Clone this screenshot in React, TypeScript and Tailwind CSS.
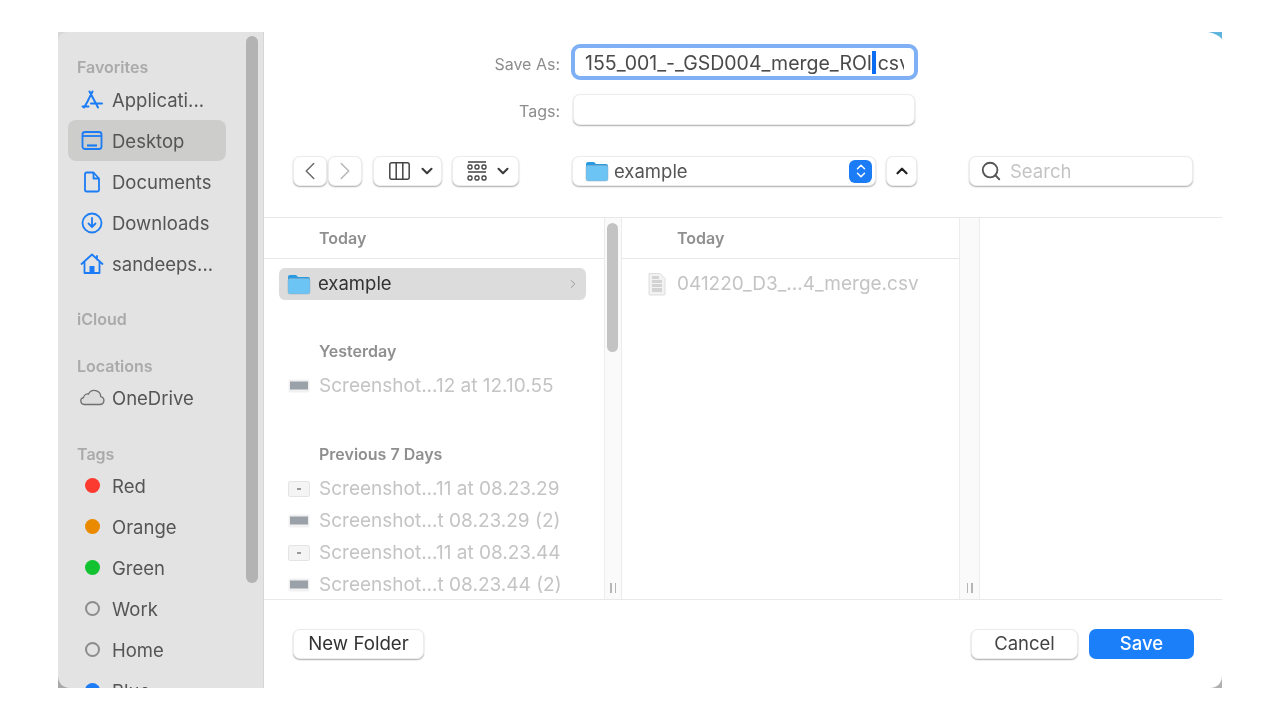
import { ChevronDown, ChevronLeft, ChevronRight, ChevronUp, Search } from "lucide-react";

const BLUE = "#1b7cf5";

function AppsIcon() {
  return (
    <svg width="24" height="24" viewBox="0 0 24 24" fill="none" stroke={BLUE} strokeWidth="2" strokeLinecap="round">
      <path d="M12.5 3.5 7 14.5M9.5 3.5l8.5 16M2.5 18.5h6M11 15.5h11M7 14.5l-3 5" />
    </svg>
  );
}

function DesktopIcon() {
  return (
    <svg width="24" height="24" viewBox="0 0 24 24" fill="none" stroke={BLUE} strokeWidth="1.8">
      <rect x="2.5" y="3" width="19" height="17" rx="2.5" />
      <path d="M3 7h18" />
      <path d="M7 16.5h10" strokeWidth="2.2" />
    </svg>
  );
}

function DocIcon() {
  return (
    <svg width="24" height="24" viewBox="0 0 24 24" fill="none" stroke={BLUE} strokeWidth="1.8" strokeLinejoin="round">
      <path d="M6.5 2.5h7L19 8.5V20a1.5 1.5 0 0 1-1.5 1.5h-11A1.500 1.500 0 0 1 5 20V4a1.500 1.500 0 0 1 1.500-1.500Z" />
      <path d="M13.5 2.5v6H19" />
    </svg>
  );
}

function DownloadIcon() {
  return (
    <svg width="24" height="24" viewBox="0 0 24 24" fill="none" stroke={BLUE} strokeWidth="1.8" strokeLinecap="round" strokeLinejoin="round">
      <circle cx="12" cy="12" r="9.5" />
      <path d="M12 7v9M8.5 12.5 12 16l3.500-3.500" />
    </svg>
  );
}

function HomeIcon() {
  return (
    <svg width="24" height="24" viewBox="0 0 24 24" fill="none" stroke={BLUE} strokeWidth="1.8" strokeLinecap="round" strokeLinejoin="round">
      <path d="M1.5 12 12 2.500 22.500 12M4.500 10v11h15V10M17 4v3.500" />
      <rect x="9.5" y="14" width="5" height="7" fill={BLUE} stroke="none" />
    </svg>
  );
}

function CloudIcon() {
  return (
    <svg width="28" height="20" viewBox="0 0 28 20" fill="#dcdcdc" stroke="#6f6f6f" strokeWidth="1.3">
      <path d="M6.5 16.5H22a4 4 0 0 0 .8-7.900A6.500 6.500 0 0 0 10.500 6a4.500 4.500 0 0 0-5 3.600 3.500 3.500 0 0 0 1 6.900Z" />
    </svg>
  );
}

function FolderIcon() {
  return (
    <svg width="24" height="24" viewBox="0 0 24 24">
      <path d="M1 5a2 2 0 0 1 2-2h6l2 2h10a2 2 0 0 1 2 2v3H1Z" fill="#2a9ae0" />
      <rect x="1" y="6.5" width="22" height="15.5" rx="2" fill="#6cc4f5" stroke="#8ea9b8" strokeWidth="0.5" />
    </svg>
  );
}

function Thumb({ kind }: { kind: "dark" | "light" }) {
  return kind === "dark" ? (
    <svg width="22" height="16" viewBox="0 0 22 16">
      <rect x="0.5" y="1.5" width="21" height="13" rx="1.5" fill="#f1f1f1" />
      <rect x="2" y="3.5" width="18" height="8" fill="#9aa1a9" />
    </svg>
  ) : (
    <svg width="22" height="18" viewBox="0 0 22 18">
      <rect x="0.5" y="1.5" width="21" height="15" rx="1.5" fill="#f4f4f4" stroke="#e4e4e4" />
      <rect x="9" y="8" width="4" height="2" fill="#9a9a9a" />
    </svg>
  );
}

function CsvIcon() {
  return (
    <svg width="20" height="24" viewBox="0 0 20 24">
      <path d="M2 1.5h11l5 5V22a1 1 0 0 1-1 1H3a1 1 0 0 1-1-1Z" fill="#f2f2f2" stroke="#dedede" />
      <path d="M5 4h7v3H5ZM5 8h10v3H5ZM5 12h10v3H5ZM5 16h10v4H5Z" fill="#d3d3d3" />
    </svg>
  );
}

function ColumnsIcon() {
  return (
    <svg width="21" height="18" viewBox="0 0 21 18" fill="none" stroke="#444" strokeWidth="1.5">
      <rect x="0.8" y="0.8" width="19.4" height="16.4" rx="2" />
      <path d="M7.200 1v16M13.800 1v16" />
    </svg>
  );
}

function GridIcon() {
  return (
    <svg width="20" height="21" viewBox="0 0 20 21" fill="none" stroke="#444" strokeWidth="1.4">
      <path d="M1 1h18M1 11h18" />
      <rect x="1" y="4" width="4" height="4" rx="1.5" />
      <rect x="8" y="4" width="4" height="4" rx="1.5" />
      <rect x="15" y="4" width="4" height="4" rx="1.5" />
      <rect x="1" y="15" width="4" height="4" rx="1.5" />
      <rect x="8" y="15" width="4" height="4" rx="1.5" />
      <rect x="15" y="15" width="4" height="4" rx="1.5" />
    </svg>
  );
}

function SideHead({ label, mt }: { label: string; mt: string }) {
  return <div className={`${mt} h-[20px] pl-[19px] text-[16px] leading-[20px] font-semibold text-[#aaa]`}>{label}</div>;
}

function SideItem({ icon, label, active }: { icon: React.ReactNode; label: string; active?: boolean }) {
  return (
    <div className={`ml-[10px] mr-[37px] h-[41px] flex items-center rounded-[8px] ${active ? "bg-[#cdcdcc]" : ""}`}>
      <div className="w-[44px] pl-[4px] shrink-0 flex justify-center">{icon}</div>
      <span className="pt-[2px] text-[18.5px] text-[#555] whitespace-nowrap">{label}</span>
    </div>
  );
}

function Dot({ color }: { color: string }) {
  return <span className="w-[15px] h-[15px] rounded-full" style={{ background: color }} />;
}

function Ring() {
  return <span className="w-[15px] h-[15px] rounded-full border-2 border-[#8c8c8c]" />;
}

function Sidebar() {
  return (
    <aside className="relative w-[206px] shrink-0 bg-[#e3e3e3] overflow-hidden border-r border-[#d6d6d6]">
      <div className="pt-[25px]">
        <SideHead label="Favorites" mt="" />
        <div className="mt-[2px]">
          <SideItem icon={<AppsIcon />} label="Applicati..." />
          <SideItem icon={<DesktopIcon />} label="Desktop" active />
          <SideItem icon={<DocIcon />} label="Documents" />
          <SideItem icon={<DownloadIcon />} label="Downloads" />
          <SideItem icon={<HomeIcon />} label="sandeeps..." />
        </div>
        <SideHead label="iCloud" mt="mt-[25px]" />
        <SideHead label="Locations" mt="mt-[27px]" />
        <div className="mt-[1px]">
          <SideItem icon={<CloudIcon />} label="OneDrive" />
        </div>
        <SideHead label="Tags" mt="mt-[26px]" />
        <div className="mt-[1px]">
          <SideItem icon={<Dot color="#fb3a30" />} label="Red" />
          <SideItem icon={<Dot color="#ea8a00" />} label="Orange" />
          <SideItem icon={<Dot color="#12c230" />} label="Green" />
          <SideItem icon={<Ring />} label="Work" />
          <SideItem icon={<Ring />} label="Home" />
          <SideItem icon={<Dot color="#1b7cf5" />} label="Blue" />
        </div>
      </div>
      <div className="absolute top-[4px] right-[5px] w-[12px] h-[547px] rounded-full bg-[#b3b3b3]" />
    </aside>
  );
}

const btn = "bg-white rounded-[7px] border border-[#ececec] shadow-[0_1px_1.5px_rgba(0,0,0,0.32)]";

function TopForm() {
  return (
    <div className="h-[186px] shrink-0 border-b border-[#e8e8e8]">
      <div className="flex items-center h-[36px] mt-[12px]">
        <span className="w-[296px] pt-[4px] text-right text-[16px] text-[#8d8d8d]">Save As:</span>
        <div className="ml-[11px] w-[347px] h-[36px] rounded-[9px] border-[4px] border-[#7fb0f5] bg-white flex items-center px-[10px] overflow-hidden">
          <div className="whitespace-nowrap overflow-hidden w-full pt-[2px] text-[19.5px] leading-[24px] text-[#4a4a4a]">
            155_001_-_GSD004_merge_ROI.csv
          </div>
        </div>
      </div>
      <div className="flex items-center h-[31px] mt-[14px]">
        <span className="w-[296px] pt-[2px] text-right text-[16px] text-[#8d8d8d]">Tags:</span>
        <div className={`ml-[13px] w-[342px] h-[31px] ${btn}`} />
      </div>
      <div className="flex items-center h-[30px] mt-[31px] pl-[29px]">
        <div className={`w-[34px] h-[30px] flex items-center justify-center ${btn}`}>
          <ChevronLeft size={30} strokeWidth={1.2} className="text-[#6a6a6a]" />
        </div>
        <div className={`ml-[1px] w-[34px] h-[30px] flex items-center justify-center ${btn}`}>
          <ChevronRight size={30} strokeWidth={1.2} className="text-[#b5b5b5]" />
        </div>
        <div className={`ml-[11px] w-[69px] h-[30px] flex items-center pl-[15px] gap-[8px] ${btn}`}>
          <ColumnsIcon />
          <ChevronDown size={18} strokeWidth={2.8} className="text-[#3c3c3c]" />
        </div>
        <div className={`ml-[10px] w-[67px] h-[30px] flex items-center pl-[14px] gap-[7px] ${btn}`}>
          <GridIcon />
          <ChevronDown size={18} strokeWidth={2.8} className="text-[#3c3c3c]" />
        </div>
        <div className={`ml-[53px] w-[304px] h-[30px] flex items-center pl-[12px] pr-[3px] ${btn}`}>
          <FolderIcon />
          <span className="ml-[5px] pt-[2px] text-[18.5px] text-[#555]">example</span>
          <div className="ml-auto w-[23px] h-[23px] rounded-[6px] bg-[#1b7cf5] flex flex-col items-center justify-center">
            <ChevronUp size={14} strokeWidth={2.5} className="text-white -mb-[3px]" />
            <ChevronDown size={14} strokeWidth={2.5} className="text-white -mt-[3px]" />
          </div>
        </div>
        <div className={`ml-[10px] w-[31px] h-[30px] flex items-center justify-center ${btn}`}>
          <ChevronUp size={18} strokeWidth={3} className="text-[#222]" />
        </div>
        <div className={`ml-[52px] w-[224px] h-[30px] flex items-center pl-[10px] ${btn}`}>
          <Search size={22} strokeWidth={2} className="text-[#555]" />
          <span className="ml-[8px] pt-[2px] text-[18.5px] text-[#c4c4c4]">Search</span>
        </div>
      </div>
    </div>
  );
}

function ListHead({ label }: { label: string }) {
  return (
    <div className="h-[41px] shrink-0 flex items-center pl-[55px] text-[16px] font-semibold text-[#8f8f8f] border-b border-[#e8e8e8]">
      {label}
    </div>
  );
}

function GroupHead({ label }: { label: string }) {
  return <div className="h-[32px] flex items-center pl-[55px] text-[16px] font-semibold text-[#8f8f8f]">{label}</div>;
}

function FileRow({ kind, label }: { kind: "dark" | "light"; label: string }) {
  return (
    <div className="h-[32px] flex items-center">
      <div className="w-[55px] pl-[15px] flex justify-center">
        <Thumb kind={kind} />
      </div>
      <span className="text-[19px] text-[#c4c4c4] whitespace-nowrap">{label}</span>
    </div>
  );
}

function Grip() {
  return (
    <div className="mt-auto mb-[6px] flex justify-center gap-[3px]">
      <span className="w-[1.5px] h-[10px] bg-[#b5b5b5]" />
      <span className="w-[1.5px] h-[10px] bg-[#b5b5b5]" />
    </div>
  );
}

function Browser() {
  return (
    <div className="flex h-[382px] shrink-0 border-b border-[#e8e8e8] overflow-hidden">
      <div className="w-[340px] shrink-0 overflow-hidden">
        <ListHead label="Today" />
        <div className="mt-[9px] ml-[15px] mr-[18px] h-[32px] rounded-[6px] bg-[#dcdcdc] flex items-center pl-[8px] pr-[6px]">
          <FolderIcon />
          <span className="ml-[7px] text-[18.5px] text-[#333]">example</span>
          <ChevronRight size={14} strokeWidth={1.5} className="ml-auto text-[#8f8f8f]" />
        </div>
        <div className="h-[35px]" />
        <GroupHead label="Yesterday" />
        <div className="h-[3px]" />
        <FileRow kind="dark" label="Screenshot...12 at 12.10.55" />
        <div className="h-[36px]" />
        <GroupHead label="Previous 7 Days" />
        <div className="h-[3px]" />
        <FileRow kind="light" label="Screenshot...11 at 08.23.29" />
        <FileRow kind="dark" label="Screenshot...t 08.23.29 (2)" />
        <FileRow kind="light" label="Screenshot...11 at 08.23.44" />
        <FileRow kind="dark" label="Screenshot...t 08.23.44 (2)" />
      </div>
      <div className="relative w-[18px] shrink-0 bg-[#fafafa] border-x border-[#ececec] flex flex-col">
        <div className="absolute top-[5px] left-[2px] w-[11px] h-[129px] rounded-full bg-[#c3c3c3]" />
        <Grip />
      </div>
      <div className="w-[337px] shrink-0">
        <ListHead label="Today" />
        <div className="mt-[9px] h-[32px] flex items-center pl-[25px]">
          <CsvIcon />
          <span className="ml-[10px] text-[19px] text-[#c4c4c4]">041220_D3_...4_merge.csv</span>
        </div>
      </div>
      <div className="w-[21px] shrink-0 bg-[#fafafa] border-x border-[#ececec] flex flex-col">
        <Grip />
      </div>
      <div className="flex-1" />
    </div>
  );
}

function Footer() {
  return (
    <div className="flex-1 flex items-start pt-[29px] pl-[29px] pr-[28px]">
      <div className={`w-[131px] h-[30px] flex items-center justify-center text-[18.7px] text-[#333] ${btn}`}>New Folder</div>
      <div className={`ml-auto w-[107px] h-[30px] flex items-center justify-center text-[18.5px] text-[#444] ${btn}`}>Cancel</div>
      <div className="ml-[11px] w-[105px] h-[30px] rounded-[7px] bg-[#1b7ffa] flex items-center justify-center text-[18.5px] font-medium text-white">Save</div>
    </div>
  );
}

export default function App() {
  return (
    <div className="w-[1280px] h-[720px] bg-white overflow-hidden pt-[32px] pl-[58px] font-['Inter',sans-serif]">
      <div className="relative flex w-[1164px] h-[656px] bg-white overflow-hidden blur-[0.4px]">
        <Sidebar />
        <main className="flex-1 flex flex-col min-w-0">
          <TopForm />
          <Browser />
          <Footer />
        </main>
        <div className="absolute top-[19px] left-[814px] w-[4px] h-[23px] bg-[#0a6cf0]" />
        <svg className="absolute top-0 right-0" width="14" height="8" viewBox="0 0 14 8"><path d="M0 0h14v7C10 3 6 1 0 0Z" fill="#5fb4de" /></svg>
        <svg className="absolute bottom-0 right-0" width="12" height="12" viewBox="0 0 12 12"><path d="M12 0v12H0C7 12 12 7 12 0Z" fill="#b0b0b0" /></svg>
        <svg className="absolute top-0 left-0" width="10" height="10" viewBox="0 0 10 10"><path d="M0 0h10C4 0 0 4 0 10Z" fill="#d8d8d8" /></svg>
        <svg className="absolute bottom-0 left-0" width="12" height="12" viewBox="0 0 12 12"><path d="M0 12V0C0 7 5 12 12 12Z" fill="#a8a8a8" /></svg>
      </div>
    </div>
  );
}
